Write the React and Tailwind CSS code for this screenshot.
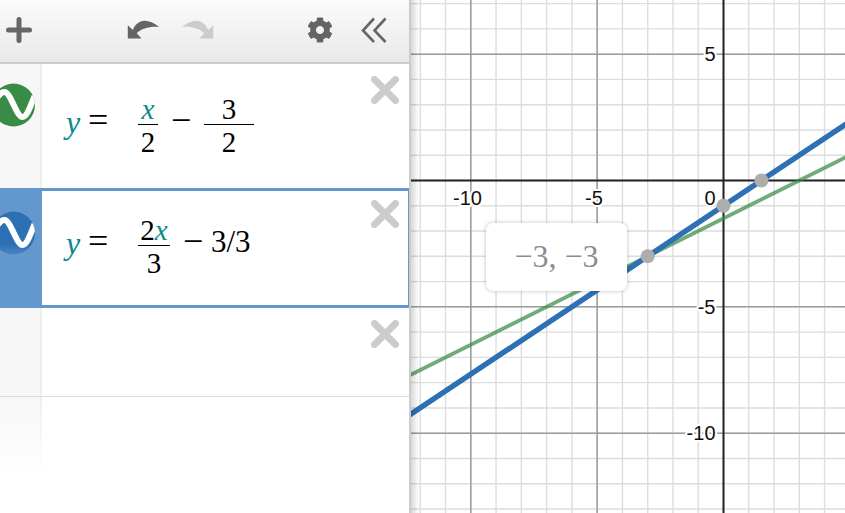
import React from "react";
import { FaCog } from "react-icons/fa";

const U = 25.27;
const OX = 312.5;
const OY = 180.5;
const W = 434;
const H = 513;
const px = (u) => OX + u * U;
const py = (v) => OY - v * U;
const range = (a, b) => Array.from({ length: b - a + 1 }, (_, i) => a + i);

function Wave({ color, dark }) {
  const id = color.replace("#", "g");
  return (
    <svg width="43" height="44" viewBox="-21.5 -22 43 44" className="-ml-[8px] shrink-0 overflow-visible">
      <defs>
        <linearGradient id={id} x1="0" y1="0" x2="0" y2="1">
          <stop offset="0" stopColor={color} />
          <stop offset="0.75" stopColor={color} />
          <stop offset="1" stopColor={dark} />
        </linearGradient>
        <clipPath id={id + "c"}>
          <circle cx="0" cy="0" r="21.5" />
        </clipPath>
      </defs>
      <circle cx="0" cy="0" r="21.5" fill={`url(#${id})`} />
      <path
        clipPath={`url(#${id}c)`}
        d="M-24 7 C-18 -6 -14 -13 -9 -13 C-3 -13 3 12 9 12 C13 12 16 4 21 -9"
        fill="none"
        stroke="#fff"
        strokeWidth="6"
      />
    </svg>
  );
}

function Close({ className }) {
  return (
    <svg width="28" height="28" viewBox="0 0 28 28" className={"shrink-0 " + className}>
      <path d="M3.5 3.5 L24.5 24.5 M24.5 3.5 L3.5 24.5" stroke="#cccccc" strokeWidth="7" strokeLinecap="round" />
    </svg>
  );
}

function Frac({ top, bottom, width }) {
  return (
    <span className="inline-flex flex-col items-center shrink-0" style={{ width }}>
      <span className="h-[30px] leading-[30px] text-[29px] whitespace-nowrap">{top}</span>
      <span className="h-px w-full bg-black" />
      <span className="h-[30px] leading-[30px] text-[29px] pt-[2px]">{bottom}</span>
    </span>
  );
}

const Var = ({ children }) => <i className="text-[#0a8a8a]">{children}</i>;

function Lhs() {
  return (
    <>
      <span className="text-[32px] leading-[30px] pt-[13px] w-[22px]"><Var>y</Var></span>
      <span className="text-[36px] leading-[30px] pt-[11px] w-[50px]">=</span>
    </>
  );
}

function Undo({ color, flip }) {
  return (
    <svg width="33" height="20" viewBox="126.5 17 33 20" className={flip ? "-scale-x-100 shrink-0" : "shrink-0"}>
      <path
        d="M127.3 22.3 L127.3 35.6 L141 35.6 L136.2 30.2 C141 25.5 150 23 158.6 24 C153 19.5 147 17.3 142.5 18 C138.5 18.6 135 20.8 132.3 27 Z"
        fill={color}
      />
    </svg>
  );
}

function Graph() {
  return (
    <svg width={W} height={H} viewBox={`0 0 ${W} ${H}`} className="block">
      <rect width={W} height={H} fill="#fff" />
      {range(-12, 5).map((u) => (
        <line key={"vm" + u} x1={px(u)} x2={px(u)} y1="0" y2={H} stroke="#dddddd" strokeWidth="1.4" />
      ))}
      {range(-13, 7).map((v) => (
        <line key={"hm" + v} x1="0" x2={W} y1={py(v)} y2={py(v)} stroke="#dddddd" strokeWidth="1.4" />
      ))}
      {[-10, -5].map((u) => (
        <line key={"vM" + u} x1={px(u)} x2={px(u)} y1="0" y2={H} stroke="#9c9c9c" strokeWidth="1.5" />
      ))}
      {[5, -5, -10].map((v) => (
        <line key={"hM" + v} x1="0" x2={W} y1={py(v)} y2={py(v)} stroke="#9c9c9c" strokeWidth="1.5" />
      ))}
      <line x1={OX} x2={OX} y1="0" y2={H} stroke="#222" strokeWidth="2" />
      <line x1="0" x2={W} y1={OY} y2={OY} stroke="#222" strokeWidth="2" />

      <g fontFamily="'Liberation Sans', Arial, sans-serif" fontSize="20" fill="#111" stroke="#fff" strokeWidth="4" strokeLinejoin="round" style={{ paintOrder: "stroke" }}>
        <text x="56.5" y="204.5" textAnchor="middle">-10</text>
        <text x="183" y="204.5" textAnchor="middle">-5</text>
        <text x="304.5" y="204.5" textAnchor="end">0</text>
        <text x="304.5" y="61" textAnchor="end">5</text>
        <text x="304.5" y="313.5" textAnchor="end">-5</text>
        <text x="304.5" y="439.5" textAnchor="end">-10</text>
      </g>

      <line x1="-2" x2={W + 2} y1={py((-2 - OX) / U / 2 - 1.5)} y2={py((W + 2 - OX) / U / 2 - 1.5)} stroke="#388c46" strokeOpacity="0.72" strokeWidth="3.8" />
      <line x1="-2" x2={W + 2} y1={py(((-2 - OX) / U) * (2 / 3) - 1)} y2={py(((W + 2 - OX) / U) * (2 / 3) - 1)} stroke="#2d70b3" strokeWidth="5.4" />
      {[[-3, -3], [0, -1], [1.5, 0]].map(([u, v]) => (
        <circle key={u} cx={px(u)} cy={py(v)} r="7" fill="#adadad" />
      ))}
    </svg>
  );
}

export default function App() {
  return (
    <div className="flex w-[845px] h-[513px] overflow-hidden bg-white font-['Liberation_Serif',serif] text-black">
      <aside className="w-[411px] shrink-0 h-full border-r-2 border-[#cccccc] flex flex-col bg-white relative z-10">
        <header className="h-[64px] shrink-0 flex items-center border-b-2 border-[#cccccc] bg-gradient-to-b from-[#fbfbfb] to-[#e9e9e9] pb-[3px]">
          <svg width="26" height="26" viewBox="0 0 26 26" className="ml-[6px] shrink-0">
            <path d="M13 2.5 V23.5 M2.5 13 H23.5" stroke="#666" strokeWidth="5" strokeLinecap="round" />
          </svg>
          <span className="ml-[95px]"><Undo color="#646464" /></span>
          <span className="ml-[21px]"><Undo color="#cccccc" flip /></span>
          <FaCog className="ml-[93px] shrink-0 text-[#646464] text-[26px]" />
          <svg width="26" height="26" viewBox="0 0 26 26" className="ml-[28px] shrink-0">
            <path d="M13 1.5 L2 13.5 L13 25 M24.5 1.5 L13.5 13.5 L24.5 25" fill="none" stroke="#666" strokeWidth="2.6" />
          </svg>
        </header>

        <div className="h-[124px] shrink-0 flex">
          <div className="w-[42px] shrink-0 bg-[#f7f7f7] border-r-2 border-[#eeeeee] flex items-start pt-[19px] overflow-hidden">
            <Wave color="#388c46" dark="#388c46" />
          </div>
          <div className="flex-1 flex justify-between">
            <div className="flex items-start pl-[24px] pt-[30px]">
              <Lhs />
              <Frac width={20} top={<Var>x</Var>} bottom="2" />
              <span className="text-[36px] leading-[30px] pt-[11px] ml-[13px] w-[33px]">−</span>
              <Frac width={50} top="3" bottom="2" />
            </div>
            <Close className="mt-[12px] mr-[10px]" />
          </div>
        </div>

        <div className="h-[120px] shrink-0 flex border-y-[3px] border-r border-[#6298ce]">
          <div className="w-[42px] shrink-0 bg-[#6298ce] flex items-start pt-[20px] overflow-hidden">
            <Wave color="#2d70b3" dark="#4a85c0" />
          </div>
          <div className="flex-1 flex justify-between">
            <div className="flex items-start pl-[24px] pt-[24px]">
              <Lhs />
              <Frac width={32} top={<span>2<Var>x</Var></span>} bottom="3" />
              <span className="text-[36px] leading-[30px] pt-[11px] ml-[13px] w-[28px]">−</span>
              <span className="text-[31px] leading-[30px] pt-[12px] whitespace-nowrap">3/3</span>
            </div>
            <Close className="mt-[9px] mr-[9px]" />
          </div>
        </div>

        <div className="h-[89px] shrink-0 flex border-b border-[#dddddd]">
          <div className="w-[42px] shrink-0 bg-[#f7f7f7] border-r-2 border-[#eeeeee]" />
          <div className="flex-1 flex justify-end">
            <Close className="mt-[12px] mr-[10px]" />
          </div>
        </div>

        <div className="h-[78px] shrink-0 flex">
          <div className="w-[42px] shrink-0 bg-gradient-to-b from-[#f7f7f7] to-white relative">
            <div className="absolute right-0 top-0 bottom-0 w-[2px] bg-gradient-to-b from-[#eeeeee] to-white" />
          </div>
        </div>
      </aside>

      <main className="relative flex-1 h-full overflow-hidden">
        <Graph />
        <div className="absolute left-0 top-0 bottom-0 w-[8px] bg-gradient-to-r from-black/15 to-transparent" />
        <div className="absolute left-[75px] top-[223px] w-[141px] h-[68px] rounded-[7px] bg-white shadow-[0_0_4px_rgba(0,0,0,0.25)] flex items-center justify-center text-[32px] text-[#8c8c8c] whitespace-nowrap pb-[3px]">
          −3, −3
        </div>
      </main>
    </div>
  );
}
